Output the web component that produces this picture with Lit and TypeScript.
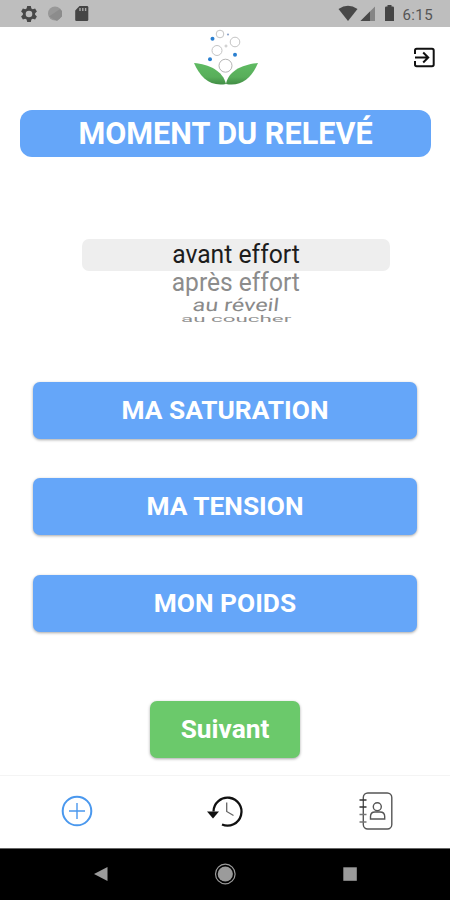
import { LitElement, html, css, svg } from "lit";
import { customElement } from "lit/decorators.js";

@customElement("app-root")
export class AppRoot extends LitElement {
  static styles = css`
    :host {
      display: flex;
      flex-direction: column;
      width: 450px;
      height: 900px;
      overflow: hidden;
      background: #fff;
      font-family: Roboto, "Liberation Sans", sans-serif;
    }
    svg { display: block; flex: none; }
    .status {
      height: 26.5px;
      flex: none;
      background: #bebebe;
    }
    .clock { font-size: 15px; fill: #555; letter-spacing: 0.4px; }
    .header {
      height: 83.5px;
      flex: none;
    }
    .title {
      flex: none;
      height: 47px;
      margin: 0 19px 0 20px;
      border-radius: 12px;
      background: #65a6f9;
      color: #fff;
      font-size: 30.6px;
      line-height: 47px;
      font-weight: 700;
      text-align: center;
    }
    .picker {
      flex: none;
      width: 308px;
      height: 143px;
      margin: 82px 0 0 82px;
      display: flex;
      flex-direction: column;
      align-items: center;
      font-size: 26px;
    }
    .option { white-space: nowrap; flex: none; }
    .selected {
      width: 100%;
      height: 32px;
      border-radius: 7px;
      background: #eee;
      text-align: center;
      color: #1c1c1c;
    }
    .label { display: block; line-height: 31px; transform: scaleX(0.95); }
    .next { height: 24px; line-height: 22px; color: #8c8c8c; transform: scale(0.945, 0.96); }
    .third { height: 18px; line-height: 18px; margin-top: 1px; color: #8a8a8a; transform: scale(0.9, 0.68) skewX(-5deg); }
    .fourth { height: 10px; line-height: 10px; color: #8f8f8f; transform: scale(0.86, 0.34); }
    .actions {
      flex: none;
      display: flex;
      flex-direction: column;
      align-items: center;
      gap: 39.3px;
      height: 392.5px;
    }
    .button {
      flex: none;
      width: 384px;
      height: 57px;
      line-height: 57px;
      border-radius: 7px;
      background: #65a6f9;
      color: #fff;
      font-size: 26.3px;
      font-weight: 700;
      text-align: center;
      box-shadow: 0 1px 3px rgba(0, 0, 0, 0.35);
    }
    .submit {
      width: 150px;
      margin-top: 30.5px;
      background: #6bc96b;
    }
    .tabs {
      flex: none;
      height: 73.5px;
      box-sizing: border-box;
      border-top: 1px solid #f4f4f4;
    }
    .nav { flex: none; height: 52px; background: #000; border-top: 1px solid #666; box-sizing: border-box; }
  `;

  private leaf() {
    return svg`
      <path d="M194 63C209 64 223 71 226 84C210 87 200 77 194 63Z" fill="url(#leaf)" />
      <path d="M258 63C243 64 228 71 226 84C242 87 252 77 258 63Z" fill="url(#leaf)" />`;
  }

  render() {
    return html`
      <svg class="status" width="450" height="26.5" viewBox="0 0 450 26.5">
        <g transform="translate(29 14)" fill="#484848">
          <path fill-rule="evenodd" d="M-1.8-8h3.6l.6 2.4 1.4.8 2.3-.7 1.8 3.1-1.8 1.7v1.4l1.8 1.7-1.8 3.1-2.3-.7-1.4.8-.6 2.4h-3.6l-.6-2.4-1.4-.8-2.3.7-1.8-3.1 1.8-1.7v-1.4l-1.8-1.7 1.8-3.1 2.3.7 1.4-.8zM0-3.300a3.300 3.300 0 1 0 0 6.600a3.300 3.300 0 1 0 0-6.600z" />
        </g>
        <circle cx="55" cy="13.5" r="7" fill="#989898" />
        <path d="M49 16.500L60 9l2 2v5.500l-5 4.500z" fill="#8c8c8c" />
        <path d="M79.500 6H87q1.300 0 1.300 1.300V19.700q0 1.300-1.300 1.300H76.500q-1.300 0-1.300-1.300V10.500z" fill="#454545" />
        <path d="M80 8v3M82.800 8v3M85.600 8v3" stroke="#aaa" stroke-width="1.400" />
        <path d="M338.500 9Q348 2.500 357.500 9L348 21z" fill="#484848" />
        <path d="M375 6.500V21H360.500z" fill="#858585" />
        <path d="M370 11.500V21H360.500z" fill="#484848" />
        <path d="M387.500 6.500V5h4v1.500h1.300q1.200 0 1.200 1.200V21h-9V7.700q0-1.200 1.200-1.200z" fill="#454545" />
        <text class="clock" x="402.500" y="19.500">6:15</text>
      </svg>
      <svg class="header" width="450" height="83.5" viewBox="0 27 450 83.5">
        <defs>
          <linearGradient id="leaf" x1="0" y1="0" x2="0" y2="1">
            <stop offset="0" stop-color="#5fbb63" />
            <stop offset=".65" stop-color="#58ae5a" />
            <stop offset="1" stop-color="#418d45" />
          </linearGradient>
        </defs>
        ${this.leaf()}
        <g fill="#fff" stroke="#c4c4c4" stroke-width="1">
          <circle cx="225.500" cy="65.700" r="6.500" stroke="#b5b5b5" />
          <circle cx="217" cy="50.500" r="5" />
          <circle cx="235" cy="42" r="4.800" />
          <circle cx="220" cy="34" r="3.800" />
          <circle cx="226" cy="46" r="1" />
        </g>
        <g fill="#2a7fd0">
          <circle cx="212.500" cy="38.700" r="2" />
          <circle cx="235" cy="54.700" r="2" />
          <circle cx="210" cy="59.300" r="2" />
          <circle cx="228" cy="34.500" r="1.100" fill="#8fa5ca" />
        </g>
        <g fill="none" stroke="#111" stroke-width="2">
          <path d="M415 54V50.500q0-1.700 1.700-1.700H432q1.700 0 1.700 1.700V64.500q0 1.700-1.700 1.700H416.700q-1.700 0-1.700-1.700V61" />
          <path d="M415 57.500H427.500M423.200 52.500L428.200 57.500L423.200 62.500" />
        </g>
      </svg>
      <div class="title">MOMENT DU RELEVÉ</div>
      <div class="picker">
        <div class="option selected"><span class="label">avant effort</span></div>
        <div class="option next">après effort</div>
        <div class="option third">au réveil</div>
        <div class="option fourth">au coucher</div>
      </div>
      <div class="actions">
        <div class="button">MA SATURATION</div>
        <div class="button">MA TENSION</div>
        <div class="button">MON POIDS</div>
        <div class="button submit">Suivant</div>
      </div>
      <svg class="tabs" width="450" height="73.5" viewBox="0 775.5 450 72.5">
        <g fill="none" stroke="#4a98ee">
          <circle cx="77" cy="810.500" r="14.300" stroke-width="2" />
          <path d="M69 810.500H85M77 802.500V818.500" stroke-width="1.400" />
        </g>
        <g fill="none" stroke="#111">
          <path d="M213.500 811A14 14 0 1 1 222 824" stroke-width="2.300" />
          <path d="M226.700 802V811L233.500 815" stroke="#666" stroke-width="1.300" />
          <path d="M207 811H219L213 818z" fill="#111" stroke="none" />
        </g>
        <g fill="none" stroke="#555" stroke-width="1.400">
          <rect x="363.300" y="792.500" width="28.500" height="36" rx="4.500" />
          <path d="M359.500 799.500H366.500M359.500 806.500H366.500" stroke="#333" />
          <path d="M359.500 814H366.500M359.500 821.500H366.500" stroke="#777" />
          <circle cx="377.300" cy="806.300" r="4" />
          <path d="M370.500 818.500V816Q370.500 811.500 375 811.500H380Q384.700 811.500 384.700 816V818.500z" />
        </g>
      </svg>
      <svg class="nav" width="450" height="52" viewBox="0 849 450 51">
        <path d="M94 874L107.500 867V881z" fill="#9b9b9b" />
        <circle cx="225.300" cy="874" r="7.600" fill="#9b9b9b" />
        <circle cx="225.300" cy="874" r="9.800" fill="none" stroke="#9b9b9b" stroke-width="1.200" />
        <rect x="343.300" y="867.300" width="13.500" height="13.500" fill="#9b9b9b" />
      </svg>
    `;
  }
}
